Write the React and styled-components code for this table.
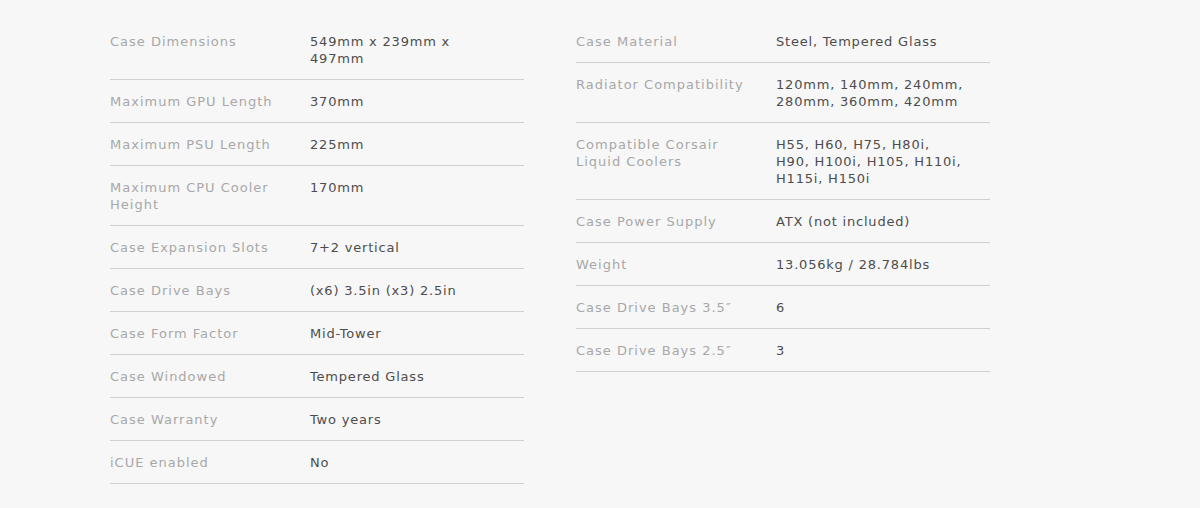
import React from 'react';
import styled, { createGlobalStyle } from 'styled-components';

const GlobalStyle = createGlobalStyle`
  html, body {
    margin: 0;
    padding: 0;
    background: #f7f7f7;
  }
  body {
    font-family: "DejaVu Sans", "Liberation Sans", sans-serif;
  }
`;

const Page = styled.div`
  width: 1200px;
  height: 508px;
  background: #f7f7f7;
  box-sizing: border-box;
  padding: 20px 0 0 110px;
  display: flex;
  align-items: flex-start;
  gap: 52px;
`;

const SpecList = styled.div`
  width: 414px;
  display: flex;
  flex-direction: column;
`;

const SpecRow = styled.div`
  display: grid;
  grid-template-columns: 200px 1fr;
  padding: 13px 0 12px;
  border-bottom: 1px solid #cfcfcf;
  font-size: 13px;
  line-height: 17px;
`;

const Label = styled.div`
  color: #a8a8a8;
  letter-spacing: 1px;
`;

const Value = styled.div`
  color: #4d4d4d;
  letter-spacing: 0.8px;
`;

const Line = styled.div`
  white-space: nowrap;
`;

const left = [
  [['Case Dimensions'], ['549mm x 239mm x', '497mm']],
  [['Maximum GPU Length'], ['370mm']],
  [['Maximum PSU Length'], ['225mm']],
  [['Maximum CPU Cooler', 'Height'], ['170mm']],
  [['Case Expansion Slots'], ['7+2 vertical']],
  [['Case Drive Bays'], ['(x6) 3.5in (x3) 2.5in']],
  [['Case Form Factor'], ['Mid-Tower']],
  [['Case Windowed'], ['Tempered Glass']],
  [['Case Warranty'], ['Two years']],
  [['iCUE enabled'], ['No']],
];

const right = [
  [['Case Material'], ['Steel, Tempered Glass']],
  [['Radiator Compatibility'], ['120mm, 140mm, 240mm,', '280mm, 360mm, 420mm']],
  [['Compatible Corsair', 'Liquid Coolers'], ['H55, H60, H75, H80i,', 'H90, H100i, H105, H110i,', 'H115i, H150i']],
  [['Case Power Supply'], ['ATX (not included)']],
  [['Weight'], ['13.056kg / 28.784lbs']],
  [['Case Drive Bays 3.5\u2033'], ['6']],
  [['Case Drive Bays 2.5\u2033'], ['3']],
];

function Specs({ rows }) {
  return (
    <SpecList>
      {rows.map(([label, value], i) => (
        <SpecRow key={i}>
          <Label>{label.map((l) => <Line key={l}>{l}</Line>)}</Label>
          <Value>{value.map((v) => <Line key={v}>{v}</Line>)}</Value>
        </SpecRow>
      ))}
    </SpecList>
  );
}

export default function App() {
  return (
    <>
      <GlobalStyle />
      <Page>
        <Specs rows={left} />
        <Specs rows={right} />
      </Page>
    </>
  );
}
